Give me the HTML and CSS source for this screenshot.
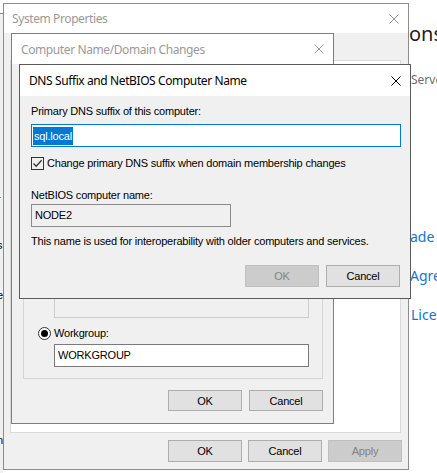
FILE: index.html
```html
<!DOCTYPE html>
<html lang="en">
<head>
<meta charset="utf-8">
<title>DNS Suffix and NetBIOS Computer Name</title>
<link rel="stylesheet" href="styles.css">
</head>
<body>
<div class="desk">
  <div class="back-left">
    <div class="bl-rule"></div>
    <span class="bl-word w1">r</span>
    <span class="bl-word w2">s</span>
    <span class="bl-word w3">e</span>
    <span class="bl-word w4">n</span>
  </div>
  <div class="back-right">
    <span class="br-head">ons</span>
    <span class="br-sub">Serve</span>
    <a class="br-link l1">ade y</a>
    <a class="br-link l2">Agre</a>
    <a class="br-link l3">Licen</a>
  </div>

  <section class="win sp">
    <header class="titlebar tb-sp inactive">
      <span class="title">System Properties</span>
      <svg class="xicon" width="10" height="10" viewBox="0 0 10 10"><path d="M0.5 0.5 L9.5 9.5 M9.5 0.5 L0.5 9.5" stroke="currentColor" stroke-width="1" fill="none"/></svg>
    </header>
    <div class="sp-body">
      <div class="tabpage"></div>
      <div class="btnrow sp-btns">
        <button class="btn">OK</button>
        <button class="btn">Cancel</button>
        <button class="btn disabled">Apply</button>
      </div>
    </div>
  </section>

  <section class="win cn">
    <header class="titlebar tb-cn inactive">
      <span class="title">Computer Name/Domain Changes</span>
      <svg class="xicon" width="10" height="10" viewBox="0 0 10 10"><path d="M0.5 0.5 L9.5 9.5 M9.5 0.5 L0.5 9.5" stroke="currentColor" stroke-width="1" fill="none"/></svg>
    </header>
    <div class="cn-body">
      <fieldset class="group">
        <div class="radio-row">
          <span class="radio"></span><span>Domain:</span>
        </div>
        <div class="field disabled-field"></div>
        <div class="radio-row wg">
          <span class="radio on"></span><span>Workgroup:</span>
        </div>
        <div class="field white-field">WORKGROUP</div>
      </fieldset>
      <div class="btnrow cn-btns">
        <button class="btn">OK</button>
        <button class="btn">Cancel</button>
      </div>
    </div>
  </section>

  <section class="win dns">
    <header class="titlebar tb-dns">
      <span class="title">DNS Suffix and NetBIOS Computer Name</span>
      <svg class="xicon" width="10" height="10" viewBox="0 0 10 10"><path d="M0.5 0.5 L9.5 9.5 M9.5 0.5 L0.5 9.5" stroke="currentColor" stroke-width="1" fill="none"/></svg>
    </header>
    <div class="dns-body">
      <label class="lbl l-suffix">Primary DNS suffix of this computer:</label>
      <div class="field focus-field"><span class="sel">sql.local</span></div>
      <div class="check-row">
        <span class="checkbox"><svg width="11" height="11" viewBox="0 0 11 11"><path d="M1.5 5.5 L4.2 8.3 L9.6 2.2" stroke="#333" stroke-width="1.3" fill="none"/></svg></span>
        <span>Change primary DNS suffix when domain membership changes</span>
      </div>
      <label class="lbl l-netbios">NetBIOS computer name:</label>
      <div class="field ro-field">NODE2</div>
      <p class="note">This name is used for interoperability with older computers and services.</p>
      <div class="btnrow dns-btns">
        <button class="btn disabled">OK</button>
        <button class="btn">Cancel</button>
      </div>
    </div>
  </section>
</div>
</body>
</html>
```
FILE: styles.css
```css
* { box-sizing: border-box; margin: 0; padding: 0; }
html, body { width: 437px; height: 473px; overflow: hidden; }
body {
  background: #fff;
  font-family: "Liberation Sans", Arial, sans-serif;
  font-size: 11px;
  line-height: 13px;
  letter-spacing: -0.2px;
  color: #000;
}
.desk { position: relative; width: 437px; height: 473px; overflow: hidden; }

/* backdrop */
.back-left {
  position: absolute; left: 0; top: 0; width: 3px; height: 473px;
  background: #f0f0f0;
  display: flex; flex-direction: column; align-items: flex-start;
  overflow: hidden;
}
.bl-rule { width: 100%; height: 14px; border-bottom: 1px solid #888; background: #fff; }
.bl-word { color: #000; font-size: 11px; line-height: 13px; margin-left: -3px; }
.w1 { margin-top: 179px; }
.w2 { margin-top: 33px; }
.w3 { margin-top: 37px; }
.w4 { margin-top: 132px; }

.back-right {
  position: absolute; left: 406px; top: 0; width: 60px;
  display: flex; flex-direction: column; align-items: flex-start;
  font-family: "Noto Sans", "Open Sans", sans-serif;
  letter-spacing: 0;
}
.br-head { margin-top: 22px; font-size: 20px; line-height: 24px; color: #1e1e1e; padding-left: 3px; }
.br-sub { margin-top: 26px; font-size: 12px; line-height: 16px; color: #6d6d6d; padding-left: 5px; }
.br-link { font-size: 14px; line-height: 20px; color: #1a73d0; padding-left: 4px; }
.l1 { margin-top: 139px; }
.l2 { margin-top: 19px; }
.l3 { margin-top: 19px; padding-left: 5px; }

/* windows */
.win {
  position: absolute;
  display: flex; flex-direction: column;
  background: #f0f0f0;
  border: 1px solid #8c8c8c;
}
.sp { left: 3px; top: 3px; width: 406px; height: 467px; }
.cn { left: 11px; top: 33px; width: 323px; height: 391px; border-color: #7d7d7d; }
.dns { left: 19px; top: 64px; width: 392px; height: 235px; border-color: #5a5a5a; }

.titlebar {
  flex: none;
  display: flex; align-items: center; justify-content: space-between;
  background: #fff;
  font-family: "Noto Sans", "Open Sans", sans-serif;
  font-size: 12px;
  letter-spacing: -0.4px;
  color: #000;
}
.titlebar.inactive { color: #999; }
.tb-sp { height: 29px; padding: 0 9px 0 8px; }
.tb-cn { height: 30px; padding: 0 9px 0 9px; }
.tb-dns { height: 31px; padding: 0 9px 0 9px; }
.xicon { display: block; }

/* system properties */
.sp-body { flex: 1; display: flex; flex-direction: column; padding: 27px 6px 0 6px; }
.tabpage { width: 391px; height: 373px; background: #fff; border: 1px solid #d9d9d9; }
.sp-btns { margin-top: 7px; gap: 6px; }

/* buttons */
.btnrow { display: flex; justify-content: flex-end; }
.btn {
  width: 74px; height: 22px;
  background: #e1e1e1; border: 1px solid #adadad;
  font-family: inherit; font-size: 11px; letter-spacing: -0.2px; color: #000;
  display: flex; align-items: center; justify-content: center;
}
.btn.disabled { background: #cccccc; border-color: #bfbfbf; color: #838383; }

/* computer name */
.cn-body {
  flex: 1; display: flex; flex-direction: column; justify-content: flex-end;
  padding: 0 10px 12px 11px;
}
.group {
  border: 1px solid #d5d5d5;
  padding: 0 13px 11px 30px;
  display: flex; flex-direction: column;
}
.radio-row { display: flex; align-items: center; gap: 3px; margin-left: -16px; height: 13px; }
.radio-row.wg { margin-top: 9px; }
.radio {
  width: 13px; height: 13px; border-radius: 50%;
  border: 1px solid #333; background: #fff;
  display: flex; align-items: center; justify-content: center;
}
.radio.on::after { content: ""; width: 7px; height: 7px; border-radius: 50%; background: #000; }
.cn-btns { margin-top: 11px; gap: 7px; }
.cn-btns .btn { height: 21px; }

/* fields */
.field {
  height: 23px; padding: 0 0 0 3px;
  display: flex; align-items: center;
  font-size: 11px;
}
.disabled-field { height: 22px; margin-top: 4px; background: #f0f0f0; border: 1px solid #cccccc; }
.white-field { margin-top: 4px; background: #fff; border: 1px solid #7a7a7a; }
.focus-field { margin-top: 6px; background: #fff; border: 1px solid #0078d7; padding-left: 1px; }
.sel { background: #0078d7; color: #fff; height: 18px; line-height: 18px; padding: 0 1px 0 1px; }
.ro-field { width: 200px; margin-top: 2px; background: #f0f0f0; border: 1px solid #8a8a8a; }

/* dns */
.dns-body { flex: 1; display: flex; flex-direction: column; padding: 9px 9px 0 11px; }
.lbl { display: block; }
.check-row { display: flex; align-items: center; gap: 3px; margin-top: 10px; height: 13px; }
.checkbox {
  width: 13px; height: 13px; border: 1px solid #333; background: #f0f0f0;
  display: flex; align-items: center; justify-content: center;
}
.checkbox svg { display: block; }
.l-netbios { margin-top: 19px; }
.note { margin-top: 8px; }
.dns-btns { margin-top: 17px; gap: 7px; padding-right: 1px; }
```
